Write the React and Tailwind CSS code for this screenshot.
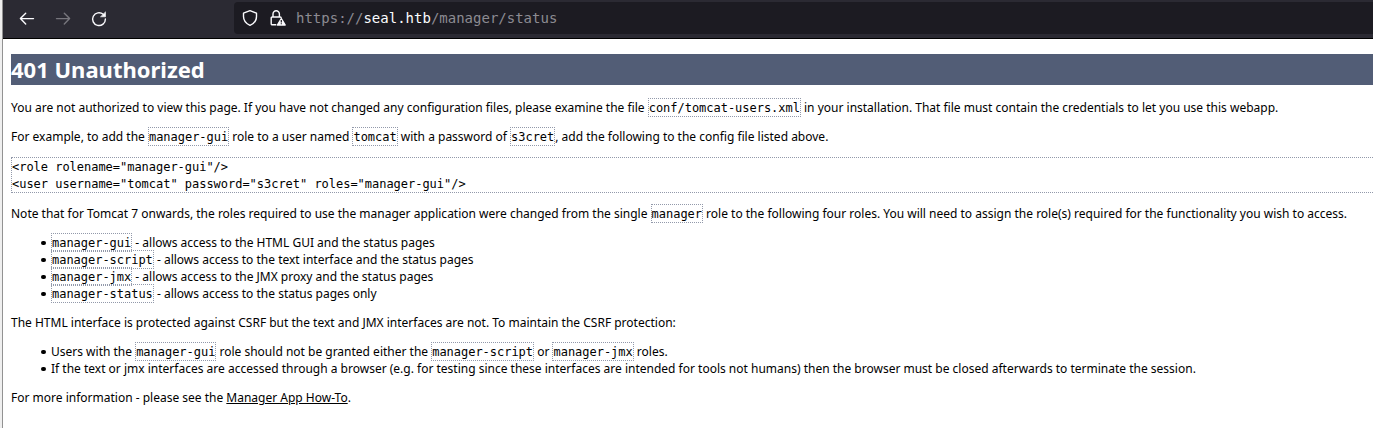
const Code = ({ children }) => (
  <code className="border border-dotted border-[#9299aa] pt-[2px] pb-[1px] font-['DejaVu_Sans_Mono',monospace] text-[12px] leading-none tracking-[-0.025px]">{children}</code>
);

const Item = ({ children }) => (
  <li className="before:mr-[5.5px] before:-ml-[10px] before:inline-block before:size-[4.5px] before:rounded-full before:bg-black before:align-[2px] before:content-['']">{children}</li>
);

const Toolbar = () => (
  <header className="flex h-[39px] items-start border-b border-black bg-[#2b2a33] text-[#fbfbfe]">
    <div className="flex w-[231px] shrink-0 items-center gap-5 pt-[11px] pl-[16px]">
      <svg className="size-4" viewBox="0 0 16 16" fill="none" stroke="currentColor" strokeWidth="1.4" strokeLinecap="round" strokeLinejoin="round">
        <path d="M14.5 7.6H1.7M6.7 2.3 1.4 7.6l5.3 5.3" />
      </svg>
      <svg className="size-4 text-[#77767d]" viewBox="0 0 16 16" fill="none" stroke="currentColor" strokeWidth="1.4" strokeLinecap="round" strokeLinejoin="round">
        <path d="M1.5 7.6h12.8M9.3 2.3l5.3 5.3-5.3 5.3" />
      </svg>
      <svg className="size-4" viewBox="0 0 16 16" fill="none" stroke="currentColor" strokeWidth="1.4" strokeLinecap="round">
        <path d="M12.2 3.3A6.4 6.4 0 1 0 14.4 8" />
        <path d="M14.5 1.2v4.6H9.8z" fill="currentColor" strokeWidth=".6" strokeLinejoin="round" />
      </svg>
    </div>
    <div className="mt-[2px] flex h-8 flex-1 items-center rounded-l bg-[#1c1b22] pl-2">
      <svg className="size-4" viewBox="0 0 16 16" fill="none" stroke="currentColor" strokeWidth="1.4" strokeLinejoin="round">
        <path d="M8 .7 14.5 3.2v3.3c0 3.8-2 6.8-6.5 8.8-4.5-2-6.5-5-6.5-8.8V3.2z" />
      </svg>
      <svg className="ml-3 size-4" viewBox="0 0 16 16" fill="none" stroke="currentColor" strokeWidth="1.4" strokeLinejoin="round">
        <path d="M3 7V4a3.2 3.2 0 0 1 6.4 0v3M6.3 14.7H2.2a1 1 0 0 1-1-1V8a1 1 0 0 1 1-1h8a1 1 0 0 1 1 1" />
        <path d="M11.3 8.7 15.2 15H7.4z" fill="currentColor" />
        <path d="M11.3 10v2.4M11.3 13.2v1.1" stroke="#1c1b22" strokeWidth="1.2" />
      </svg>
      <div className="ml-[10px] font-['DejaVu_Sans_Mono',monospace] text-[14px] leading-4 whitespace-pre text-[#8c8b92]">
        https://<span className="text-[#fbfbfe]">seal.htb</span>/manager/status
      </div>
    </div>
  </header>
);

export default function App() {
  return (
    <div className="h-[428px] overflow-hidden border-l-2 border-[#efefef] bg-white">
      <div className="h-full border-l border-[#929292]">
        <Toolbar />
        <main className="pt-[15px] pl-2 font-['Noto_Sans',sans-serif] text-[12px] leading-[17px] whitespace-nowrap text-black">
          <h1 className="mb-[14px] h-[31px] bg-[#525d76] text-[22px] leading-[31px] font-bold text-white">401 Unauthorized</h1>
          <p className="mb-3">You are not authorized to view this page. If you have not changed any configuration files, please examine the file <Code>conf/tomcat-users.xml</Code> in your installation. That file must contain the credentials to let you use this webapp.</p>
          <p className="mb-3">For example, to add the <Code>manager-gui</Code> role to a user named <Code>tomcat</Code> with a password of <Code>s3cret</Code>, add the following to the config file listed above.</p>
          <pre className="mb-3 h-9 overflow-hidden border border-r-0 border-dotted border-[#9299aa] pt-px font-['DejaVu_Sans_Mono',monospace] tracking-[-0.025px]">{`<role rolename="manager-gui"/>
<user username="tomcat" password="s3cret" roles="manager-gui"/>`}</pre>
          <p className="mb-3">Note that for Tomcat 7 onwards, the roles required to use the manager application were changed from the single <Code>manager</Code> role to the following four roles. You will need to assign the role(s) required for the functionality you wish to access.</p>
          <ul className="mb-3 pl-10">
            <Item><Code>manager-gui</Code> - allows access to the HTML GUI and the status pages</Item>
            <Item><Code>manager-script</Code> - allows access to the text interface and the status pages</Item>
            <Item><Code>manager-jmx</Code> - allows access to the JMX proxy and the status pages</Item>
            <Item><Code>manager-status</Code> - allows access to the status pages only</Item>
          </ul>
          <p className="mb-3">The HTML interface is protected against CSRF but the text and JMX interfaces are not. To maintain the CSRF protection:</p>
          <ul className="mb-3 pl-10">
            <Item>Users with the <Code>manager-gui</Code> role should not be granted either the <Code>manager-script</Code> or <Code>manager-jmx</Code> roles.</Item>
            <Item>If the text or jmx interfaces are accessed through a browser (e.g. for testing since these interfaces are intended for tools not humans) then the browser must be closed afterwards to terminate the session.</Item>
          </ul>
          <p>For more information - please see the <a href="#howto" className="underline">Manager App How-To</a>.</p>
        </main>
      </div>
    </div>
  );
}
